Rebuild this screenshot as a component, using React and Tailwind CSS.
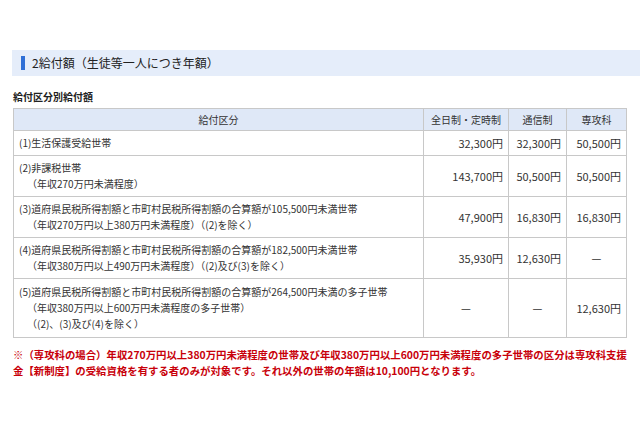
export default function App(){
const f={fontFamily:'"Noto Sans CJK JP","Noto Sans",sans-serif'};
const rows=[
 {h:'h-[25px]',l:['(1)生活保護受給世帯'],v:['32,300円','32,300円','50,500円']},
 {h:'h-[41px]',l:['(2)非課税世帯','（年収270万円未満程度）'],v:['143,700円','50,500円','50,500円']},
 {h:'h-[41px]',l:['(3)道府県民税所得割額と市町村民税所得割額の合算額が105,500円未満世帯','（年収270万円以上380万円未満程度）（(2)を除く）'],v:['47,900円','16,830円','16,830円']},
 {h:'h-[41px]',l:['(4)道府県民税所得割額と市町村民税所得割額の合算額が182,500円未満世帯','（年収380万円以上490万円未満程度）（(2)及び(3)を除く）'],v:['35,930円','12,630円','—']},
 {h:'h-[59px]',l:['(5)道府県民税所得割額と市町村民税所得割額の合算額が264,500円未満の多子世帯','（年収380万円以上600万円未満程度の多子世帯）','（(2)、(3)及び(4)を除く）'],v:['—','—','12,630円']},
];
return <div style={f} className="w-[640px] h-[426px] bg-white text-[#333] pt-[50px]">
 <div className="ml-[12px] h-[26px] bg-[#e5edfa] flex items-center pl-[9px] gap-[7px]">
  <div className="w-[4px] h-[14px] bg-[#2f6fd6]"></div>
  <span className="text-[12px] text-[#222]">2給付額（生徒等一人につき年額）</span>
 </div>
 <div className="ml-[13px] mt-[13px] text-[10px] h-[19px] font-semibold text-[#222]">給付区分別給付額</div>
 <table className="ml-[13px] w-[614px] border-collapse text-[10px] leading-[15px]">
  <thead><tr className="h-[22px] bg-[#dfe8f7]">
   <th className="border border-[#c8c8c8] font-normal w-[410px]">給付区分</th>
   <th className="border border-[#c8c8c8] font-normal w-[85px]">全日制・定時制</th>
   <th className="border border-[#c8c8c8] font-normal w-[58px]">通信制</th>
   <th className="border border-[#c8c8c8] font-normal">専攻科</th>
  </tr></thead>
  <tbody>{rows.map((r,i)=><tr key={i} className={r.h}>
   <td className="border border-[#c8c8c8] px-[5px] py-0">{r.l.map((t,j)=><div key={j} className={j?'pl-[8px] leading-[16px]':'leading-[16px]'}>{t}</div>)}</td>
   {r.v.map((v,j)=><td key={j} className={"border border-[#c8c8c8] px-[5px] text-[11px] "+(v==='—'?'text-center':'text-right')}>{v}</td>)}
  </tr>)}</tbody>
 </table>
 <div className="ml-[13px] mt-[9px] text-[10.4px] leading-[16px] text-[#c8000a] font-semibold w-[618px]">※（専攻科の場合）年収270万円以上380万円未満程度の世帯及び年収380万円以上600万円未満程度の多子世帯の区分は専攻科支援金【新制度】の受給資格を有する者のみが対象です。それ以外の世帯の年額は10,100円となります。</div>
</div>}
